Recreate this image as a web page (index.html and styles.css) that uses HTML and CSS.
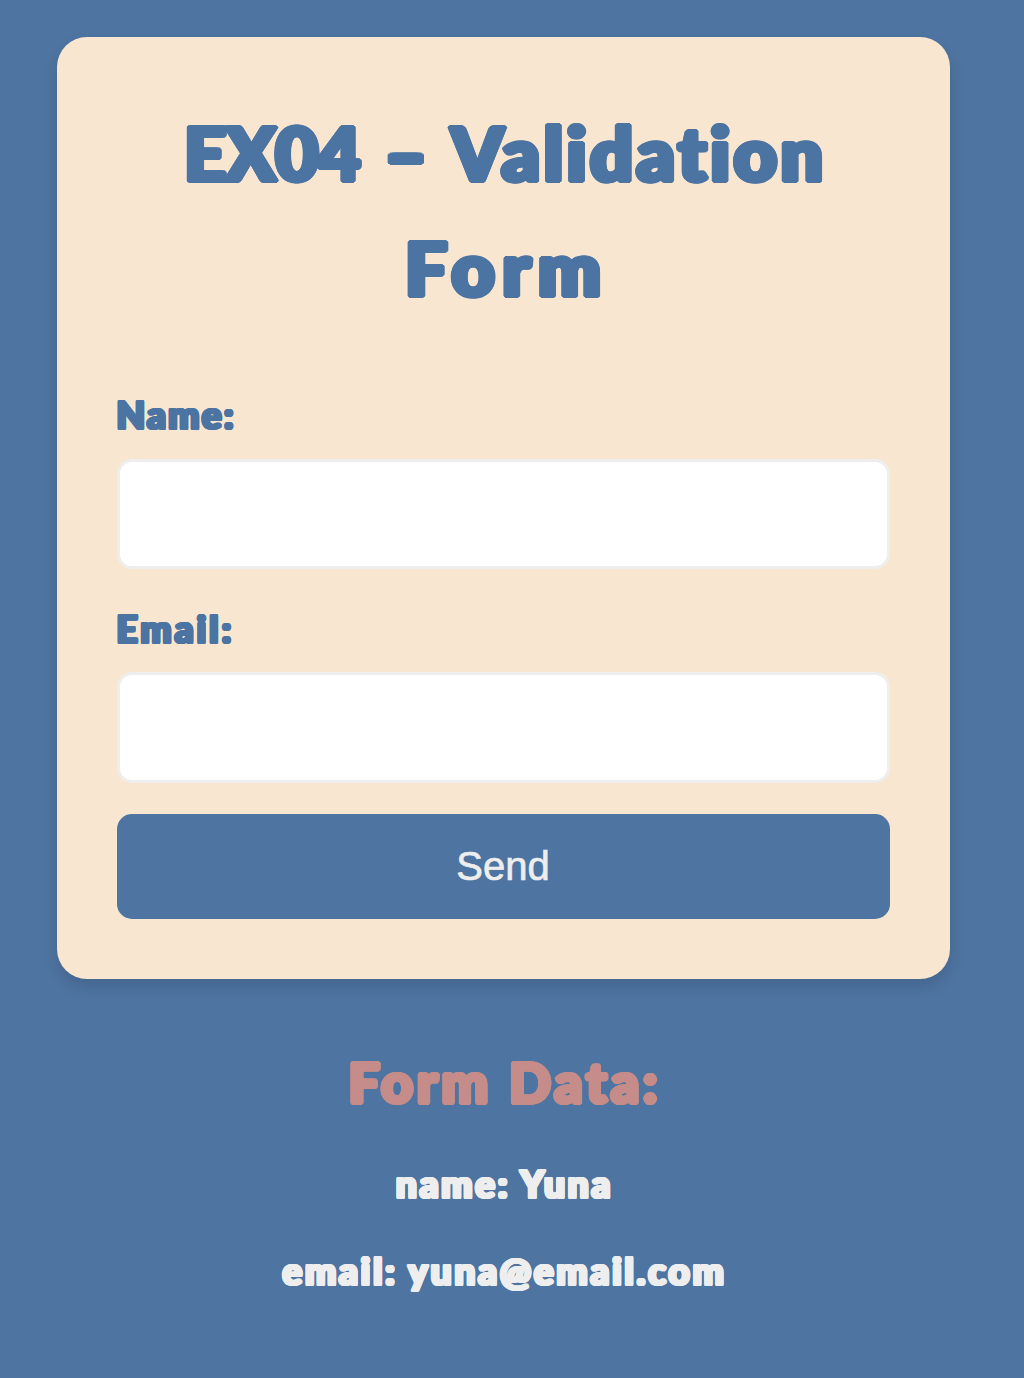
FILE: index.html
```html
<!DOCTYPE html>
<html lang="en">
<head>
<meta charset="utf-8">
<title>EX04 - Validation Form</title>
<link rel="stylesheet" href="styles.css">
</head>
<body>
<main class="page">
  <form class="card">
    <h1 class="title rounded"><span class="code">EX04</span> <span class="dash">-</span> <span class="word">Validation</span><br><span class="form-word">Form</span></h1>
    <label class="label label-name rounded" for="name">Name:</label>
    <input class="input" id="name" type="text">
    <label class="label label-email rounded" for="email">Email:</label>
    <input class="input" id="email" type="text">
    <button class="button" type="button">Send</button>
  </form>
  <section class="data">
    <h2 class="data-title rounded">Form Data:</h2>
    <p class="row rounded">name: Yuna</p>
    <p class="row rounded">email: yuna@email.com</p>
  </section>
</main>
</body>
</html>
```
FILE: styles.css
```css
* { box-sizing: border-box; }
body {
  margin: 0;
  min-height: 1378px;
  background: #4e74a1;
  font-family: Lato, "Open Sans", sans-serif;
  font-weight: 900;
}
/* Thickens the letters and rounds their corners. */
.rounded {
  font-variant-ligatures: none;
  text-shadow:
    .044em 0 currentColor, -.044em 0 currentColor,
    0 .032em currentColor, 0 -.032em currentColor,
    .022em .028em currentColor, -.022em .028em currentColor,
    .022em -.028em currentColor, -.022em -.028em currentColor,
    .038em .016em currentColor, -.038em .016em currentColor,
    .038em -.016em currentColor, -.038em -.016em currentColor;
}
.page {
  width: 1006px;
  padding-top: 37px;
  display: flex;
  flex-direction: column;
  align-items: center;
}
.card {
  width: 893px;
  height: 942px;
  padding: 60px;
  display: flex;
  flex-direction: column;
  background: #f8e6d0;
  border-radius: 30px;
  box-shadow: 0 8px 16px rgba(0, 0, 0, 0.12);
}
.title {
  margin: -1px -20px 0;
  height: 291px;
  color: #4c74a2;
  font-size: 74px;
  font-weight: 900;
  line-height: 114.5px;
  text-align: center;
  white-space: nowrap;
}
.code {
  display: inline-block;
  transform: scaleX(.985);
}
.dash {
  display: inline-block;
  margin: 0 14px 0 13px;
  transform: scaleX(1.4);
}
.word { letter-spacing: 4.2px; margin-right: -4px; }
.form-word { letter-spacing: 8px; margin-right: -8px; }
.label {
  height: 72px;
  line-height: 57px;
  color: #4c74a2;
  font-size: 37px;
}
.label-name { margin-top: -1px; height: 73px; letter-spacing: 2.3px; }
.label-email { letter-spacing: 3px; }
.input {
  width: 100%;
  height: 111px;
  margin: 0 0 31px;
  border: 3px solid #eee;
  border-radius: 15px;
  background: #fff;
}
.button {
  width: 100%;
  height: 105px;
  border: 0;
  border-radius: 15px;
  background: #4e74a1;
  color: #eee;
  font: 400 40px "Liberation Sans", Arial, sans-serif;
  -webkit-text-stroke: .7px #eee;
}
.data { text-align: center; }
.data-title {
  margin: 60px 0 0;
  color: #c68c89;
  font-size: 55px;
  font-weight: 900;
  line-height: 86px;
  letter-spacing: 4px;
  text-indent: 4px;
}
.row {
  margin: 30px 0 0;
  color: #eee;
  font-size: 37px;
  line-height: 57px;
  letter-spacing: 2.75px;
  text-indent: 3px;
}
```
